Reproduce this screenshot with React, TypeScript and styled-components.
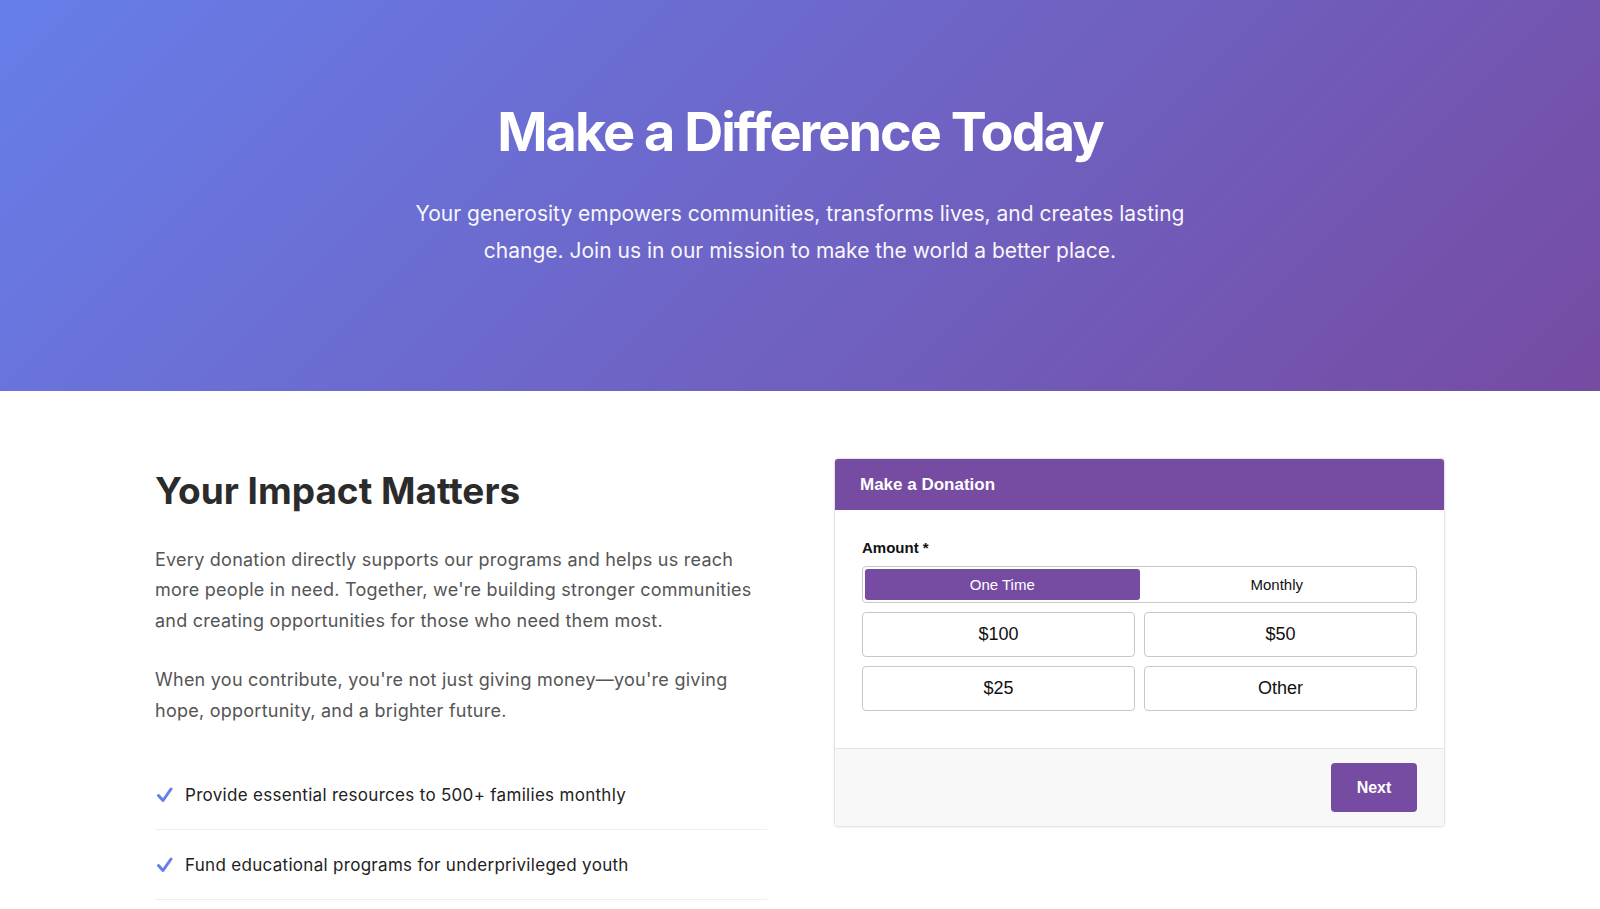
import React, { useState } from 'react';
import styled, { createGlobalStyle } from 'styled-components';

const GlobalStyle = createGlobalStyle`
  * { box-sizing: border-box; }
  body {
    margin: 0;
    font-family: Inter, "Noto Sans", sans-serif;
    background: #fff;
    color: #333;
  }
`;

const SHero = styled.header`
  background: linear-gradient(135deg, #667eea 0%, #764ba2 100%);
  color: #fff;
  text-align: center;
  padding: 100px 20px 122px;
`;

const SHeroTitle = styled.h1`
  margin: 0 0 31px;
  font-size: 54px;
  line-height: 1.2;
  font-weight: 700;
  letter-spacing: -2px;
`;

const SHeroText = styled.p`
  margin: 0 auto;
  max-width: 800px;
  font-size: 21px;
  line-height: 1.75;
  opacity: 0.95;
`;

const SMain = styled.main`
  max-width: 1290px;
  margin: 0 auto;
  padding: 67px 0 40px;
  display: grid;
  grid-template-columns: 612px 611px;
  justify-content: space-between;
  align-items: start;
`;

const SInfo = styled.section`
  padding-top: 11px;
`;

const SInfoTitle = styled.h2`
  margin: 0 0 31px;
  font-size: 37px;
  line-height: 1.2;
  font-weight: 700;
  color: #2b2b2b;
`;

const SParagraph = styled.p`
  margin: 0 0 29px;
  font-size: 18px;
  line-height: 1.7;
  letter-spacing: 0.25px;
  color: #555;
`;

const SList = styled.ul`
  list-style: none;
  margin: 33px 0 0;
  padding: 0;
`;

const SListItem = styled.li`
  display: flex;
  align-items: center;
  gap: 12px;
  padding: 20px 0 18px;
  border-bottom: 1px solid #eee;
  font-size: 17px;
  line-height: 31px;
  letter-spacing: 0.3px;
  color: #222;
`;

const SCard = styled.div`
  border: 1px solid #e3e3e3;
  border-radius: 4px;
  overflow: hidden;
  background: #fff;
  box-shadow: 0 1px 3px rgba(0, 0, 0, 0.06);
  font-family: "Liberation Sans", Arial, sans-serif;
`;

const SCardHeader = styled.div`
  background: #764ba2;
  color: #fff;
  height: 51px;
  display: flex;
  align-items: center;
  padding: 0 25px;
  font-size: 17px;
  font-weight: 700;
`;

const SCardBody = styled.div`
  padding: 29px 27px 37px;
  display: flex;
  flex-direction: column;
  gap: 9px;
`;

const SLabel = styled.div`
  font-size: 15px;
  font-weight: 700;
  color: #111;
  margin-bottom: 1px;
`;

const SToggle = styled.div`
  display: grid;
  grid-template-columns: 1fr 1fr;
  border: 1px solid #c8c8c8;
  border-radius: 4px;
  padding: 2px;
  height: 37px;
`;

const SToggleOption = styled.button<{ $active: boolean }>`
  border: none;
  border-radius: 3px;
  font-family: inherit;
  font-size: 15px;
  cursor: pointer;
  background: ${(p) => (p.$active ? '#764ba2' : 'transparent')};
  color: ${(p) => (p.$active ? '#fff' : '#111')};
`;

const SAmounts = styled.div`
  display: grid;
  grid-template-columns: 1fr 1fr;
  gap: 9px;
`;

const SAmount = styled.button`
  height: 45px;
  border: 1px solid #c8c8c8;
  border-radius: 4px;
  background: #fff;
  font-family: inherit;
  font-size: 18px;
  color: #111;
  cursor: pointer;
`;

const SCardFooter = styled.div`
  background: #f8f8f8;
  border-top: 1px solid #e6e6e6;
  padding: 14px 27px;
  display: flex;
  justify-content: flex-end;
`;

const SNext = styled.button`
  width: 86px;
  height: 49px;
  border: none;
  border-radius: 4px;
  background: #764ba2;
  color: #fff;
  font-family: inherit;
  font-size: 16px;
  font-weight: 700;
  cursor: pointer;
`;

const Check = () => (
  <svg width="18" height="16" viewBox="0 0 18 16" fill="none">
    <path d="M3.5 8.5 L8 13.5 L16 2" stroke="#667eea" strokeWidth="3" strokeLinecap="round" strokeLinejoin="round" />
  </svg>
);

const impacts = [
  'Provide essential resources to 500+ families monthly',
  'Fund educational programs for underprivileged youth',
];

const App = () => {
  const [frequency, setFrequency] = useState<'once' | 'monthly'>('once');

  return (
    <>
      <GlobalStyle />
      <SHero>
        <SHeroTitle>Make a Difference Today</SHeroTitle>
        <SHeroText>
          Your generosity empowers communities, transforms lives, and creates lasting change. Join us in our
          mission to make the world a better place.
        </SHeroText>
      </SHero>

      <SMain>
        <SInfo>
          <SInfoTitle>Your Impact Matters</SInfoTitle>
          <SParagraph>
            Every donation directly supports our programs and helps us reach more people in need. Together,
            we're building stronger communities and creating opportunities for those who need them most.
          </SParagraph>
          <SParagraph>
            When you contribute, you're not just giving money—you're giving hope, opportunity, and a brighter
            future.
          </SParagraph>
          <SList>
            {impacts.map((item) => (
              <SListItem key={item}>
                <Check />
                {item}
              </SListItem>
            ))}
          </SList>
        </SInfo>

        <SCard>
          <SCardHeader>Make a Donation</SCardHeader>
          <SCardBody>
            <SLabel>Amount *</SLabel>
            <SToggle>
              <SToggleOption $active={frequency === 'once'} onClick={() => setFrequency('once')}>
                One Time
              </SToggleOption>
              <SToggleOption $active={frequency === 'monthly'} onClick={() => setFrequency('monthly')}>
                Monthly
              </SToggleOption>
            </SToggle>
            <SAmounts>
              <SAmount>$100</SAmount>
              <SAmount>$50</SAmount>
              <SAmount>$25</SAmount>
              <SAmount>Other</SAmount>
            </SAmounts>
          </SCardBody>
          <SCardFooter>
            <SNext>Next</SNext>
          </SCardFooter>
        </SCard>
      </SMain>
    </>
  );
};

export default App;
